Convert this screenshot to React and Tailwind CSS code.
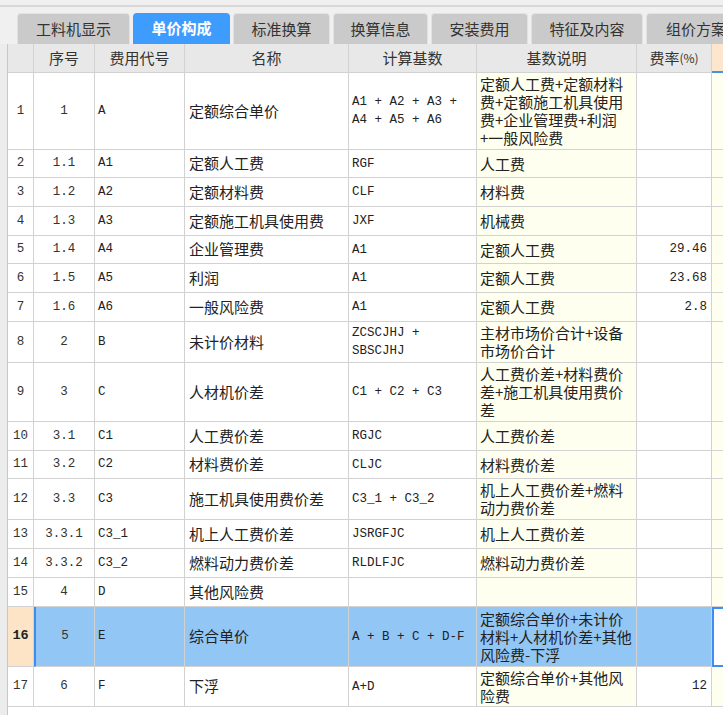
import React from "react";

const tabs = [
  { label: "工料机显示", w: "w-[113px]" },
  { label: "单价构成", w: "w-[97px]", active: true },
  { label: "标准换算", w: "w-[97px]" },
  { label: "换算信息", w: "w-[95px]" },
  { label: "安装费用", w: "w-[97px]" },
  { label: "特征及内容", w: "w-[112px]" },
  { label: "组价方案", w: "w-[100px]" },
];

const rows = [
  { n: 1, seq: "1", code: "A", name: "定额综合单价", base: ["A1 + A2 + A3 +", "A4 + A5 + A6"], desc: ["定额人工费+定额材料", "费+定额施工机具使用", "费+企业管理费+利润", "+一般风险费"], h: "h-[77px]" },
  { n: 2, seq: "1.1", code: "A1", name: "定额人工费", base: ["RGF"], desc: ["人工费"], h: "h-[28px]" },
  { n: 3, seq: "1.2", code: "A2", name: "定额材料费", base: ["CLF"], desc: ["材料费"], h: "h-[29px]" },
  { n: 4, seq: "1.3", code: "A3", name: "定额施工机具使用费", base: ["JXF"], desc: ["机械费"], h: "h-[29px]" },
  { n: 5, seq: "1.4", code: "A4", name: "企业管理费", base: ["A1"], desc: ["定额人工费"], rate: "29.46", h: "h-[28px]" },
  { n: 6, seq: "1.5", code: "A5", name: "利润", base: ["A1"], desc: ["定额人工费"], rate: "23.68", h: "h-[29px]" },
  { n: 7, seq: "1.6", code: "A6", name: "一般风险费", base: ["A1"], desc: ["定额人工费"], rate: "2.8", h: "h-[29px]" },
  { n: 8, seq: "2", code: "B", name: "未计价材料", base: ["ZCSCJHJ +", "SBSCJHJ"], desc: ["主材市场价合计+设备", "市场价合计"], h: "h-[41px]" },
  { n: 9, seq: "3", code: "C", name: "人材机价差", base: ["C1 + C2 + C3"], desc: ["人工费价差+材料费价", "差+施工机具使用费价", "差"], h: "h-[59px]" },
  { n: 10, seq: "3.1", code: "C1", name: "人工费价差", base: ["RGJC"], desc: ["人工费价差"], h: "h-[29px]" },
  { n: 11, seq: "3.2", code: "C2", name: "材料费价差", base: ["CLJC"], desc: ["材料费价差"], h: "h-[28px]" },
  { n: 12, seq: "3.3", code: "C3", name: "施工机具使用费价差", base: ["C3_1 + C3_2"], desc: ["机上人工费价差+燃料", "动力费价差"], h: "h-[41px]" },
  { n: 13, seq: "3.3.1", code: "C3_1", name: "机上人工费价差", base: ["JSRGFJC"], desc: ["机上人工费价差"], h: "h-[29px]" },
  { n: 14, seq: "3.3.2", code: "C3_2", name: "燃料动力费价差", base: ["RLDLFJC"], desc: ["燃料动力费价差"], h: "h-[29px]" },
  { n: 15, seq: "4", code: "D", name: "其他风险费", base: [], desc: [], h: "h-[29px]" },
  { n: 16, seq: "5", code: "E", name: "综合单价", base: ["A + B + C + D-F"], desc: ["定额综合单价+未计价", "材料+人材机价差+其他", "风险费-下浮"], h: "h-[60px]", selected: true },
  { n: 17, seq: "6", code: "F", name: "下浮", base: ["A+D"], desc: ["定额综合单价+其他风", "险费"], rate: "12", h: "h-[40px]" },
];

const cols = "grid grid-cols-[26px_61px_90px_164px_128px_160px_75px_60px]";
const cell = "flex items-center border-r border-b border-[#d2d2d2] overflow-hidden";
const mono = "font-['Liberation_Mono','Noto_Sans_CJK_SC',monospace] text-[12.5px]";
const cjk = "font-['Noto_Sans_CJK_SC',sans-serif] text-[15px]";

export default function App() {
  return (
    <div className="w-[723px] h-[715px] overflow-hidden bg-[#f0f0f0] text-[#222] font-['Noto_Sans_CJK_SC',sans-serif]">
      <div className="h-[5px]" />
      <div className="h-[2px] bg-[#d8d8d8]" />
      <div className="h-[6px]" />
      {/* tabs */}
      <div className="h-[31px] pl-[17px] flex gap-[3px] whitespace-nowrap">
        {tabs.map((t) => (
          <div
            key={t.label}
            className={`${t.w} shrink-0 h-full rounded-t-[4px] flex items-center justify-center text-[15px] ${
              t.active
                ? "bg-[#3f9cff] text-white font-bold"
                : "bg-[#cacaca] text-[#333] border-t border-x border-[#e2e2e2]"
            }`}
          >
            {t.label}
          </div>
        ))}
      </div>

      <div className="flex h-[671px]">
        <div className="w-[7px] shrink-0 bg-[#ececec]" />
        <div className="flex-1 bg-white border-l border-[#c8c8c8] overflow-hidden">
          <div className="w-max">
            {/* header */}
            <div className={`${cols} h-[29px] bg-[#e8e8e8] text-[#333] ${cjk}`}>
              <div className={`${cell} border-[#cacaca]`} />
              <div className={`${cell} border-[#cacaca] justify-center`}>序号</div>
              <div className={`${cell} border-[#cacaca] justify-center`}>费用代号</div>
              <div className={`${cell} border-[#cacaca] justify-center`}>名称</div>
              <div className={`${cell} border-[#cacaca] justify-center`}>计算基数</div>
              <div className={`${cell} border-[#cacaca] justify-center`}>基数说明</div>
              <div className={`${cell} border-[#cacaca] justify-center`}>
                费率<span className="text-[12px]">(%)</span>
              </div>
              <div className={`${cell} border-b-2 border-b-[#4a90e2] bg-[#fde6cd]`} />
            </div>

            {rows.map((r) => {
              const bg = r.selected ? "bg-[#92c6f5]" : "";
              return (
                <div key={r.n} className={`${cols} ${r.h}`}>
                  <div
                    className={`${cell} justify-center ${mono} ${
                      r.selected ? "bg-[#fde4c6] font-bold text-[13.5px] text-[#222]" : "text-[#333]"
                    }`}
                  >
                    {r.n}
                  </div>
                  <div
                    className={`${cell} justify-center ${mono} text-[#333] ${bg} ${
                      r.selected ? "border-l-2 border-l-[#3d8ef0]" : ""
                    }`}
                  >
                    {r.seq}
                  </div>
                  <div className={`${cell} pl-[3px] ${mono} ${bg}`}>{r.code}</div>
                  <div className={`${cell} pl-[4px] ${cjk} ${bg}`}>{r.name}</div>
                  <div className={`${cell} pl-[3px] ${mono} ${bg}`}>
                    <div className="leading-[18px] whitespace-pre">
                      {r.base.map((l) => (
                        <div key={l}>{l}</div>
                      ))}
                    </div>
                  </div>
                  <div className={`${cell} pl-[3px] ${cjk} ${r.selected ? bg : "bg-[#fffff0]"}`}>
                    <div className="leading-[18px] whitespace-nowrap">
                      {r.desc.map((l) => (
                        <div key={l}>{l}</div>
                      ))}
                    </div>
                  </div>
                  <div className={`${cell} justify-end pr-[4px] ${mono} ${bg}`}>{r.rate}</div>
                  {r.selected ? (
                    <div className="border-2 border-[#3d8ef0] bg-white" />
                  ) : (
                    <div className={`${cell} bg-[#fffff0]`} />
                  )}
                </div>
              );
            })}
          </div>
        </div>
      </div>
    </div>
  );
}
